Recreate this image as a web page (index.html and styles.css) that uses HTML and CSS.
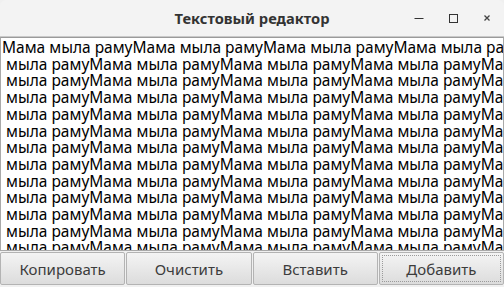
FILE: index.html
```html
<!DOCTYPE html>
<html lang="ru">
<head>
<meta charset="utf-8">
<link rel="stylesheet" href="styles.css">
</head>
<body>
<div class="window">
  <div class="titlebar">
    <span class="title">Текстовый редактор</span>
    <div class="controls">
      <span class="ctl"><svg width="10" height="10" viewBox="0 0 10 10"><path d="M0.5 5.5h9" stroke="#333" stroke-width="1"/></svg></span>
      <span class="ctl"><svg width="10" height="10" viewBox="0 0 10 10"><rect x="1.5" y="1.5" width="8" height="8" fill="none" stroke="#333" stroke-width="1"/></svg></span>
      <span class="ctl"><svg width="10" height="10" viewBox="0 0 10 10"><path d="M2.5 2.5l5 5M7.5 2.5l-5 5" stroke="#444" stroke-width="1.3"/></svg></span>
    </div>
  </div>
  <div class="editor">
    <div class="line">Мама мыла рамуМама мыла рамуМама мыла рамуМама мыла рамуМама</div>
    <div class="line"> мыла рамуМама мыла рамуМама мыла рамуМама мыла рамуМама мыла</div>
    <div class="line"> мыла рамуМама мыла рамуМама мыла рамуМама мыла рамуМама мыла</div>
    <div class="line"> мыла рамуМама мыла рамуМама мыла рамуМама мыла рамуМама мыла</div>
    <div class="line"> мыла рамуМама мыла рамуМама мыла рамуМама мыла рамуМама мыла</div>
    <div class="line"> мыла рамуМама мыла рамуМама мыла рамуМама мыла рамуМама мыла</div>
    <div class="line"> мыла рамуМама мыла рамуМама мыла рамуМама мыла рамуМама мыла</div>
    <div class="line"> мыла рамуМама мыла рамуМама мыла рамуМама мыла рамуМама мыла</div>
    <div class="line"> мыла рамуМама мыла рамуМама мыла рамуМама мыла рамуМама мыла</div>
    <div class="line"> мыла рамуМама мыла рамуМама мыла рамуМама мыла рамуМама мыла</div>
    <div class="line"> мыла рамуМама мыла рамуМама мыла рамуМама мыла рамуМама мыла</div>
    <div class="line"> мыла рамуМама мыла рамуМама мыла рамуМама мыла рамуМама мыла</div>
    <div class="line"> мыла рамуМама мыла рамуМама мыла рамуМама мыла рамуМама мыла</div>
    <div class="line"> мыла рамуМама мыла рамуМама мыла рамуМама мыла рамуМама мыла</div>
  </div>
  <div class="buttons">
    <button class="btn">Копировать</button>
    <button class="btn">Очистить</button>
    <button class="btn">Вставить</button>
    <button class="btn focused"><span class="focus">Добавить</span></button>
  </div>
</div>
</body>
</html>
```

FILE: styles.css
```css
html, body {
  margin: 0;
  padding: 0;
  background: #f2f1f0;
}
.window {
  width: 504px;
  height: 287px;
  display: flex;
  flex-direction: column;
  font-family: "Noto Sans", "Open Sans", sans-serif;
  overflow: hidden;
  background: #f0f0f0;
}
.titlebar {
  height: 37px;
  flex: none;
  position: relative;
  display: flex;
  align-items: center;
  justify-content: center;
  background: #f3f3f3;
  border-radius: 6px 6px 0 0;
  box-sizing: border-box;
  border-bottom: 1px solid #c9c9c9;
}
.title {
  font-weight: bold;
  font-size: 14.7px;
  color: #333333;
}
.controls {
  position: absolute;
  right: 0;
  top: 0;
  height: 36px;
  display: flex;
  align-items: center;
}
.ctl {
  width: 34px;
  display: flex;
  justify-content: center;
}
.editor {
  height: 214px;
  flex: none;
  background: #ffffff;
  border: 1px solid #a9a9a9;
  border-top-color: #9a9a9a;
  box-sizing: border-box;
  overflow: hidden;
  padding: 1px 0 0 1px;
  font-size: 15.5px;
  line-height: 16.7px;
  color: #000;
}
.line {
  white-space: pre;
}
.buttons {
  flex: none;
  display: grid;
  grid-template-columns: repeat(4, 1fr);
  gap: 1px;
  height: 33px;
  margin-top: 1px;
}
.btn {
  font-family: inherit;
  font-size: 15px;
  color: #3c3c3c;
  background: linear-gradient(#f4f4f4, #dcdcdc);
  border: 1px solid #b3b3b3;
  border-radius: 2px;
  padding: 0;
  margin: 0;
}
.focused {
  padding: 2px;
}
.focus {
  display: flex;
  align-items: center;
  justify-content: center;
  height: 100%;
  box-sizing: border-box;
  border: 1px dotted #9a9a9a;
}
```
